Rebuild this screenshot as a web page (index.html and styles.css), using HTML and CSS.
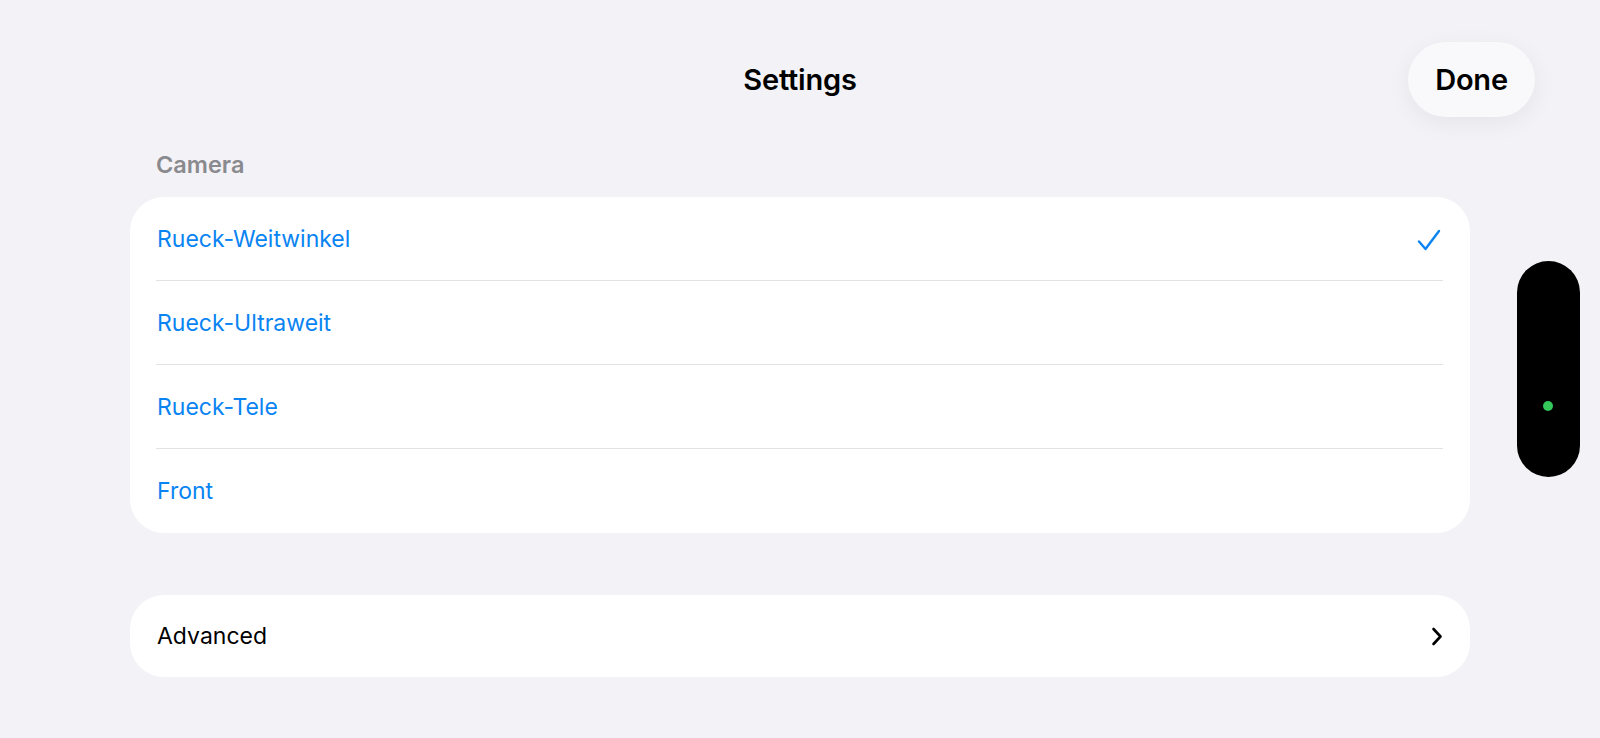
FILE: index.html
```html
<!DOCTYPE html>
<html lang="de">
<head>
<meta charset="utf-8">
<title>Settings</title>
<link rel="stylesheet" href="styles.css">
</head>
<body>
<div class="page">
  <header class="header">
    <div class="header-side"></div>
    <h1 class="title">Settings</h1>
    <div class="header-side header-right">
      <button class="done">Done</button>
    </div>
  </header>

  <div class="section-label">Camera</div>
  <div class="card">
    <div class="row"><span class="row-text blue">Rueck-Weitwinkel</span>
      <svg class="check" width="24" height="22" viewBox="0 0 24 22"><path d="M2 12.5 L8.5 20 L22 2" fill="none" stroke="#0a84f2" stroke-width="2.4" stroke-linecap="round" stroke-linejoin="round"/></svg>
    </div>
    <div class="row"><span class="row-text blue">Rueck-Ultraweit</span></div>
    <div class="row"><span class="row-text blue">Rueck-Tele</span></div>
    <div class="row last"><span class="row-text blue">Front</span></div>
  </div>

  <div class="card card-advanced">
    <div class="row last adv"><span class="row-text">Advanced</span>
      <svg class="chev" width="12" height="19" viewBox="0 0 12 19"><path d="M2.5 2 L9.5 9.5 L2.5 17" fill="none" stroke="#000" stroke-width="2.6" stroke-linecap="round" stroke-linejoin="round"/></svg>
    </div>
  </div>

  <div class="indicator"><span class="dot"></span></div>
</div>
</body>
</html>
```

FILE: styles.css
```css
html, body {
  margin: 0;
  padding: 0;
}
body {
  background: #f2f2f7;
  font-family: Inter, "Noto Sans", sans-serif;
  width: 1600px;
  height: 738px;
  overflow: hidden;
}
.page {
  position: relative;
  width: 1600px;
  height: 738px;
}
.header {
  display: grid;
  grid-template-columns: 1fr auto 1fr;
  align-items: center;
  padding-top: 42px;
  height: 75px;
}
.title {
  margin: 0;
  font-size: 29px;
  font-weight: 600;
  color: #000;
  line-height: 75px;
  letter-spacing: -0.2px;
}
.header-right {
  display: flex;
  justify-content: flex-end;
  padding-right: 65px;
}
.done {
  width: 127px;
  height: 75px;
  border: none;
  border-radius: 38px;
  background: #f9f9fc;
  box-shadow: 0 6px 24px rgba(0, 0, 0, 0.06);
  font-family: Inter, "Noto Sans", sans-serif;
  font-size: 29px;
  font-weight: 600;
  color: #000;
  padding: 0;
  letter-spacing: -0.2px;
}
.section-label {
  margin: 35px 0 19px 156px;
  line-height: 26px;
  font-size: 23.5px;
  font-weight: 600;
  color: #8a8a8e;
}
.card {
  margin: 0 130px;
  background: #fff;
  border-radius: 34px;
}
.card-advanced {
  margin-top: 62px;
}
.row {
  display: flex;
  align-items: center;
  justify-content: space-between;
  height: 83px;
  margin: 0 27px 0 26px;
  border-bottom: 1px solid #e2e2e6;
}
.row.last {
  border-bottom: none;
  height: 84px;
}
.row.adv {
  height: 82px;
}
.row-text {
  padding-left: 1px;
  font-size: 23px;
  color: #000;
}
.row-text.blue {
  color: #0a84f2;
}
.check {
  margin-right: 2px;
  margin-top: 2px;
}
.chev {
  margin-right: 0;
}
.indicator {
  position: absolute;
  left: 1517px;
  top: 261px;
  width: 63px;
  height: 216px;
  border-radius: 32px;
  background: #000;
}
.dot {
  position: absolute;
  left: 26px;
  top: 140px;
  width: 10px;
  height: 10px;
  border-radius: 50%;
  background: #34c759;
}
```
